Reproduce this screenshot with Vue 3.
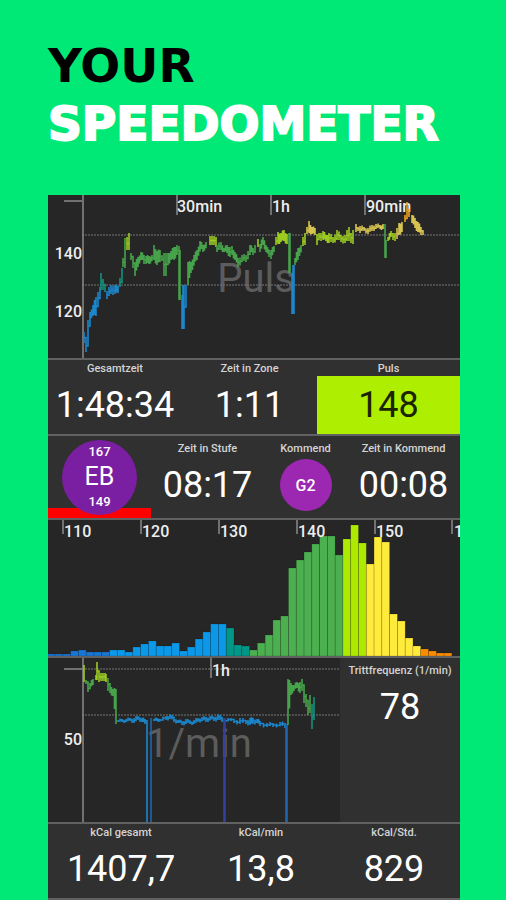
<template>
  <main class="page">
    <h1 class="title">
      <span class="line">YOUR</span>
      <span class="line strong">SPEEDOMETER</span>
    </h1>

    <section class="device">
      <svg class="chart divided" viewBox="0 0 412 163" role="img" aria-label="Puls">
        <text class="watermark" x="208" y="97">Puls</text>
        <line class="dotted" x1="34" x2="412" y1="40" y2="40" />
        <line class="dotted" x1="34" x2="412" y1="90" y2="90" />
        <path class="tick" d="M16 6H34M35 0V163M129 0V20M223 0V20M317 0V20" />
        <text class="axis end" x="34" y="64">140</text>
        <text class="axis end" x="34" y="122">120</text>
        <text v-for="t in pulseTimes" :key="t.label" class="axis" :x="t.x" y="17">{{ t.label }}</text>
        <path v-for="(s, i) in pulse" :key="i" class="trace" :class="s[0]" :d="tracePath(s[1])" />
      </svg>

      <div class="row totals divided">
        <div v-for="c in totals" :key="c.label" class="cell">
          <div class="label">{{ c.label }}</div>
          <div class="value" :class="{ zone: c.zone }">{{ c.value }}</div>
        </div>
      </div>

      <div class="row steps divided">
        <div class="stage">
          <div class="disc large">
            <span class="limit">167</span>
            <span class="name">EB</span>
            <span class="limit">149</span>
          </div>
        </div>
        <div class="cell">
          <div class="label">Zeit in Stufe</div>
          <div class="value">08:17</div>
        </div>
        <div class="cell">
          <div class="label">Kommend</div>
          <div class="disc small">G2</div>
        </div>
        <div class="cell">
          <div class="label">Zeit in Kommend</div>
          <div class="value">00:08</div>
        </div>
      </div>

      <svg class="chart divided" viewBox="0 0 412 136" role="img" aria-label="Pulsverteilung">
        <rect
          v-for="b in bars"
          :key="b.x"
          class="bar"
          :class="b.zone"
          :x="b.x"
          :y="136 - b.h"
          width="7.78"
          :height="b.h"
        />
        <path class="tick" d="M15 0V14M93 0V14M171 0V14M249 0V14M327 0V14M404 0V14" />
        <text v-for="(n, i) in beats" :key="n" class="axis" :x="16 + i * 78" y="17">{{ n }}</text>
      </svg>

      <div class="row cadence divided">
        <svg class="chart" viewBox="0 0 292 164" role="img" aria-label="Trittfrequenz">
          <text class="watermark" x="151" y="99">1/min</text>
          <line class="dotted" x1="34" x2="292" y1="11" y2="11" />
          <line class="dotted" x1="34" x2="292" y1="57" y2="57" />
          <path class="tick" d="M16 11H34M35 0V164M163 0V20" />
          <text class="axis end" x="34" y="87">50</text>
          <text class="axis" x="164" y="18">1h</text>
          <path v-for="(s, i) in cadence" :key="i" class="trace" :class="s[0]" :d="tracePath(s[1])" />
        </svg>
        <div class="cell">
          <div class="label">Trittfrequenz (1/min)</div>
          <div class="value">78</div>
        </div>
      </div>

      <div class="row energy divided">
        <div v-for="c in energy" :key="c.label" class="cell">
          <div class="label">{{ c.label }}</div>
          <div class="value">{{ c.value }}</div>
        </div>
      </div>
    </section>
  </main>
</template>

<script setup>
const totals = [
  { label: 'Gesamtzeit', value: '1:48:34' },
  { label: 'Zeit in Zone', value: '1:11' },
  { label: 'Puls', value: '148', zone: true },
]

const energy = [
  { label: 'kCal gesamt', value: '1407,7' },
  { label: 'kCal/min', value: '13,8' },
  { label: 'kCal/Std.', value: '829' },
]

const pulseTimes = [
  { label: '30min', x: 129 },
  { label: '1h', x: 224 },
  { label: '90min', x: 318 },
]

const beats = [110, 120, 130, 140, 150, 160]

// Each sample is "x min max", grouped by the training zone it falls in
const pulse = [
  ['blue', '36 137 148,38 145 157,40 125 137,42 117 123,45 110 121,48 102 121,50 97 110,52 92 102'],
  ['teal', '53 78 95,55 84 95,57 90 97'],
  ['blue', '59 96 104,61 92 101,63 90 99,65 91 100,67 90 99,70 91 98'],
  ['teal', '72 83 92,74 73 82'],
  ['green', '75 63 72,77 43 73'],
  ['lime', '79 42 55,81 38 55'],
  ['green', '83 58 65,85 63 73,87 68 81,90 62 72,93 57 63,96 60 69,98 61 69,101 61 69,104 60 66,106 50 65,109 56 70,112 55 67,114 62 66,116 58 81,118 58 81,120 58 70,123 56 65,126 52 65,129 50 60,131 51 105,132 55 105'],
  ['blue', '134 100 134,135 90 134,136 90 134,138 90 95'],
  ['green', '140 67 90,143 67 78,146 60 70,149 55 65,152 46 53,155 50 57,158 47 52'],
  ['lime', '162 41 50,164 41 50,166 41 50,168 42 52'],
  ['green', '169 50 57,173 47 55,176 53 57,179 50 58,182 52 62,184 51 60,187 57 65,190 63 72,194 60 67,198 60 67,202 50 56,205 53 60,207 50 58'],
  ['lime', '210 44 52'],
  ['green', '212 49 57,215 42 50,218 50 57,221 56 62,223 55 64,226 51 57'],
  ['lime', '228 42 50,230 37 49,233 38 47,236 35 46,239 39 49'],
  ['green', '241 38 78,242 38 78'],
  ['blue', '244 78 119,245 70 119,246 70 119'],
  ['green', '247 63 70,250 53 65,253 50 55'],
  ['lime', '255 42 51,257 38 50'],
  ['yellow', '259 32 39,261 26 38,264 32 39,267 33 40'],
  ['lime', '269 39 50,271 38 45,275 36 45,278 40 46,281 38 48,285 42 48,289 35 45,293 40 47,297 40 48,301 32 46,303 38 48,305 35 49'],
  ['yellow', '308 29 37,310 32 36,312 31 38,316 32 36,320 33 39,324 30 36,328 29 34,332 30 34,335 29 34'],
  ['green', '337 29 63,338 45 63'],
  ['lime', '340 42 46,343 36 42,347 38 46'],
  ['yellow', '349 33 44,351 28 40,354 27 37'],
  ['orange', '357 20 27,359 7 22,361 16 22'],
  ['yellow', '364 20 28,367 23 33,370 27 37,373 32 40,375 35 40'],
]

const cadence = [
  ['lime', '36 7 24'],
  ['green', '38 22 26,40 27 34,42 25 30,45 21 27'],
  ['lime', '48 17 22,49 4 22,51 14 24,53 15 23,55 15 23,57 15 23,58 16 24'],
  ['green', '60 20 33,62 25 35,65 31 38,68 31 66'],
  ['blue', '70 62 64,74 61 64,78 61 64,82 60 63,86 60 65,90 58 62,94 60 64,97 61 66,99 62 164'],
  ['navy', '103 60 164'],
  ['blue', '106 61 63,109 60 63,112 61 63,118 58 62,122 56 61,126 60 64,130 62 65,134 63 67,138 61 66,142 63 66,146 62 66,150 60 64,154 59 63,158 59 64,162 58 62,166 59 63,170 56 62,174 60 64,180 60 63,186 62 65,192 60 66,198 62 66,202 60 67,205 60 66,209 61 65,212 63 68,219 65 69,225 65 69,232 64 68,237 65 70'],
  ['indigo', '176 60 164,177 60 164'],
  ['navy', '238 66 164,239 66 164'],
  ['green', '240 21 67,243 25 36,246 27 33,249 24 30,252 24 35,254 21 33,256 32 45,258 36 49,260 44 57,262 37 55'],
  ['teal', '264 46 71,266 39 62'],
]

const histogram = [
  ['navy', [2, 2, 2, 5, 6, 4, 4, 4]],
  ['blue', [6, 6, 4, 9, 12, 15, 10, 10, 13, 5, 9, 17, 24, 32, 32]],
  ['teal', [28, 11, 10]],
  ['green', [6, 13, 21, 36, 40, 88, 96, 104, 112, 120, 120, 101]],
  ['lime', [117, 131, 113]],
  ['yellow', [92, 119, 114, 42, 35, 18, 10]],
  ['orange', [7, 5, 3, 3]],
]

const bars = histogram
  .flatMap(([zone, heights]) => heights.map((h) => ({ zone, h })))
  .map((b, i) => ({ ...b, x: i * 7.78 - 0.7 }))

// One upright bar per sample, joined by short level steps.
// Samples that lie apart get one in between, nudged up or down in turn.
function tracePath(samples) {
  const given = samples.split(',').map((s) => s.split(' ').map(Number))
  const dense = given.flatMap((s, i) => {
    const next = given[i + 1]
    if (!next || next[0] - s[0] < 3) return [s]
    const nudge = i % 2 ? 1 : -1
    const [x, top, bottom] = s.map((v, k) => (v + next[k]) / 2)
    return [s, [x, top + nudge, bottom + nudge]]
  })
  const [x0, top0] = dense[0]
  return dense.reduce(
    (d, [x, top, bottom]) => `${d}H${x}V${top}V${bottom}V${(top + bottom) / 2}`,
    `M${x0} ${top0}`
  )
}
</script>

<style>
body {
  margin: 0;
  background: #00e976;
}
</style>

<style scoped>
.page {
  padding: 37px 46px 0 48px;
  font-family: Roboto, 'Liberation Sans', sans-serif;
  color: #fff;
}

.title {
  margin: 0 0 42px;
  font-family: 'DejaVu Sans', sans-serif;
  font-size: 47px;
  line-height: 58px;
  font-weight: 700;
}

.line {
  display: block;
  color: #000;
}

.line.strong {
  color: #fff;
  -webkit-text-stroke: 2px #fff;
}

.device {
  background: #303030;
}

.divided {
  border-bottom: 2px solid #616161;
}

.chart {
  display: block;
  width: 100%;
  background: #262626;
}

.watermark {
  fill: #5c5c5c;
  font-size: 40px;
  text-anchor: middle;
}

.axis {
  fill: #eee;
  font-size: 16px;
  font-weight: 500;
}

.axis.end {
  text-anchor: end;
}

.tick {
  fill: none;
  stroke: #8a8a8a;
  stroke-width: 1.5;
}

.dotted {
  stroke: #777;
  stroke-dasharray: 2 1;
}

.navy { stroke: #1f66b0; fill: #1976d2; }
.indigo { stroke: #3440a0; }
.blue { stroke: #1c86cc; fill: #0c98e8; }
.teal { stroke: #16917c; fill: #009688; }
.green { stroke: #47a34b; fill: #4caf50; }
.lime { stroke: #9ccb22; fill: #aeea00; }
.yellow { stroke: #d6c350; fill: #ffeb3b; }
.orange { stroke: #f0a01e; fill: #fb8c00; }

.trace {
  fill: none;
  stroke-width: 1.6;
}

.bar {
  stroke: rgba(0, 0, 0, 0.22);
  stroke-width: 0.7;
}

.row {
  display: grid;
}

.totals {
  grid-template-columns: 134fr 135fr 143fr;
}

.steps {
  grid-template-columns: 103fr 113fr 83fr 113fr;
}

.steps .cell,
.cadence .cell {
  padding: 4px 0;
}

.cadence {
  grid-template-columns: 292fr 120fr;
}

.energy {
  grid-template-columns: 146fr 134fr 132fr;
}

.cell {
  min-width: 0;
  text-align: center;
}

.label {
  padding-top: 2px;
  font-size: 11px;
  line-height: 14px;
  font-weight: 500;
  color: #d4d4d4;
  white-space: nowrap;
}

.value {
  font-size: 36px;
  line-height: 58px;
}

.value.zone {
  background: #aeee00;
  color: #1a2400;
}

.stage {
  display: flex;
  justify-content: center;
  align-items: center;
  background: linear-gradient(#f00, #f00) bottom / 100% 10px no-repeat;
}

.disc {
  display: flex;
  flex-direction: column;
  align-items: center;
  justify-content: center;
  border-radius: 50%;
  background: #9c27b0;
}

.disc.large {
  width: 75px;
  height: 75px;
  background: #7b1fa2;
}

.disc.small {
  width: 52px;
  height: 52px;
  margin: 3px auto 0;
  font-size: 16px;
  font-weight: 500;
}

.limit {
  font-size: 13px;
  line-height: 18px;
  font-weight: 500;
}

.name {
  font-size: 25px;
  line-height: 32px;
}
</style>
